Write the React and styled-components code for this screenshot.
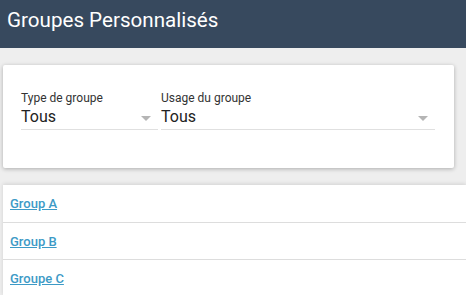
import React from "react";
import styled, { createGlobalStyle } from "styled-components";

const Global = createGlobalStyle`
  html, body { margin: 0; padding: 0; background: #eeeeee; }
  body { font-family: Roboto, "Noto Sans", Arial, sans-serif; }
  * { box-sizing: border-box; }
`;

const Page = styled.div`
  width: 466px;
  height: 295px;
  overflow: hidden;
  background: #eeeeee;
  display: flex;
  flex-direction: column;
`;

const Header = styled.header`
  height: 48px;
  flex: none;
  background: #37495e;
  color: #ffffff;
  padding: 8px 0 0 7px;
`;

const Title = styled.h1`
  margin: 0;
  font-size: 20.6px;
  font-weight: 400;
  line-height: 24px;
`;

const Card = styled.section`
  margin: 17px 12px 0 3px;
  height: 103px;
  flex: none;
  background: #ffffff;
  border-radius: 2px;
  box-shadow: 0 1px 4px rgba(0, 0, 0, 0.28);
  display: flex;
  gap: 3px;
  padding: 26px 19px 0 18px;
`;

const Field = styled.div`
  flex: ${(p) => p.$grow};
  display: flex;
  flex-direction: column;
`;

const Label = styled.label`
  font-size: 12px;
  line-height: 14px;
  color: #333333;
`;

const Select = styled.div`
  height: 25px;
  display: flex;
  align-items: center;
  justify-content: space-between;
  border-bottom: 1px solid #e0e0e0;
  padding-bottom: 1px;
  padding-right: 7px;
`;

const Value = styled.span`
  font-size: 16px;
  line-height: 18px;
  color: #222222;
`;

const Arrow = styled.span`
  width: 0;
  height: 0;
  border-left: 5px solid transparent;
  border-right: 5px solid transparent;
  border-top: 5px solid #b5b5b5;
  margin-top: 3px;
`;

const List = styled.ul`
  list-style: none;
  margin: 17px 0 0 3px;
  padding: 0;
  flex: none;
  background: #ffffff;
  box-shadow: 0 -1px 4px rgba(0, 0, 0, 0.12);
`;

const Row = styled.li`
  height: 37px;
  display: flex;
  align-items: center;
  padding-left: 7px;
  border-top: ${(p) => (p.$first ? "none" : "1px solid #dddddd")};
`;

const GroupLink = styled.a`
  font-size: 13px;
  font-weight: 500;
  color: #3d9ac6;
  text-decoration: underline;
  cursor: pointer;
`;

const fields = [
  { label: "Type de groupe", value: "Tous", grow: "0 0 137px" },
  { label: "Usage du groupe", value: "Tous", grow: "1 1 auto" },
];

const groups = ["Group A", "Group B", "Groupe C"];

export default function App() {
  return (
    <Page>
      <Global />
      <Header>
        <Title>Groupes Personnalisés</Title>
      </Header>
      <Card>
        {fields.map((f) => (
          <Field key={f.label} $grow={f.grow}>
            <Label>{f.label}</Label>
            <Select>
              <Value>{f.value}</Value>
              <Arrow />
            </Select>
          </Field>
        ))}
      </Card>
      <List>
        {groups.map((g, i) => (
          <Row key={g} $first={i === 0}>
            <GroupLink>{g}</GroupLink>
          </Row>
        ))}
      </List>
    </Page>
  );
}
